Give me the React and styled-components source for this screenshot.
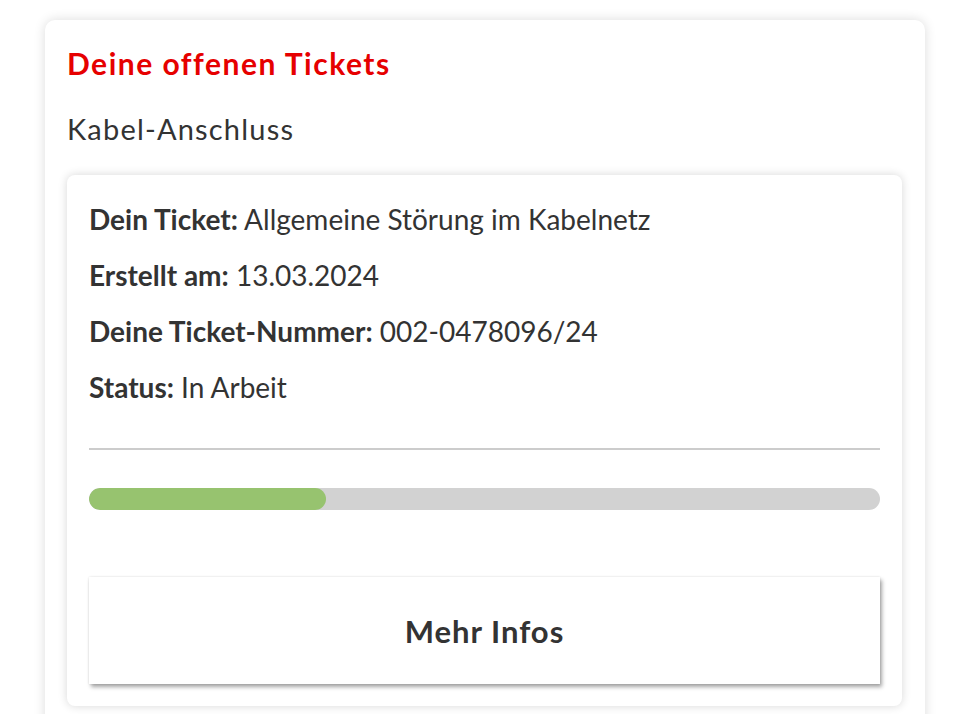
import React from "react";
import styled, { createGlobalStyle } from "styled-components";

const Global = createGlobalStyle`
  html, body { margin: 0; padding: 0; background: #ffffff; }
  body { font-family: Lato, "Open Sans", sans-serif; color: #333333; }
`;

const Page = styled.div`
  padding: 20px 35px 0 45px;
  height: 714px;
  overflow: hidden;
  box-sizing: border-box;
`;

const OuterCard = styled.section`
  background: #fff;
  border-radius: 10px;
  box-shadow: 0 0 12px rgba(0, 0, 0, 0.14);
  padding: 23px 23px 40px 22px;
  min-height: 760px;
  box-sizing: border-box;
`;

const Title = styled.h2`
  margin: 0;
  color: #e60000;
  font-size: 30px;
  font-weight: 700;
  line-height: 40px;
  letter-spacing: 1.5px;
`;

const Subtitle = styled.h3`
  margin: 26px 0 0 0;
  font-size: 29px;
  font-weight: 400;
  line-height: 40px;
  letter-spacing: 1.2px;
  color: #333;
`;

const TicketCard = styled.div`
  margin-top: 26px;
  background: #fff;
  border-radius: 8px;
  box-shadow: 0 0 10px rgba(0, 0, 0, 0.16);
  padding: 28px 22px 22px 22px;
`;

const InfoList = styled.div`
  display: flex;
  flex-direction: column;
  gap: 24px;
`;

const InfoRow = styled.div`
  font-size: 28px;
  line-height: 32px;
  color: #333;
  b { font-weight: 700; }
`;

const Divider = styled.hr`
  margin: 45px 0 0 0;
  border: 0;
  border-top: 2px solid #cccccc;
`;

const Track = styled.div`
  margin-top: 38px;
  height: 22px;
  border-radius: 11px;
  background: #d2d2d2;
  overflow: hidden;
`;

const Fill = styled.div`
  height: 100%;
  border-radius: 11px;
  background: #97c36f;
`;

const MoreButton = styled.button`
  display: block;
  width: 100%;
  margin-top: 67px;
  height: 107px;
  border: 0;
  padding: 0;
  background: #fff;
  box-shadow: 2px 3px 4px rgba(0, 0, 0, 0.35), 0 0 2px rgba(0, 0, 0, 0.12);
  font-family: inherit;
  font-size: 31px;
  font-weight: 700;
  letter-spacing: 1px;
  color: #333;
  cursor: pointer;
`;

export default function App() {
  const progress = 0.3;
  return (
    <>
      <Global />
      <Page>
        <OuterCard>
          <Title>Deine offenen Tickets</Title>
          <Subtitle>Kabel-Anschluss</Subtitle>
          <TicketCard>
            <InfoList>
              <InfoRow><b>Dein Ticket:</b> Allgemeine Störung im Kabelnetz</InfoRow>
              <InfoRow><b>Erstellt am:</b> 13.03.2024</InfoRow>
              <InfoRow><b>Deine Ticket-Nummer:</b> 002-0478096/24</InfoRow>
              <InfoRow><b>Status:</b> In Arbeit</InfoRow>
            </InfoList>
            <Divider />
            <Track>
              <Fill style={{ width: `${progress * 100}%` }} />
            </Track>
            <MoreButton>Mehr Infos</MoreButton>
          </TicketCard>
        </OuterCard>
      </Page>
    </>
  );
}
